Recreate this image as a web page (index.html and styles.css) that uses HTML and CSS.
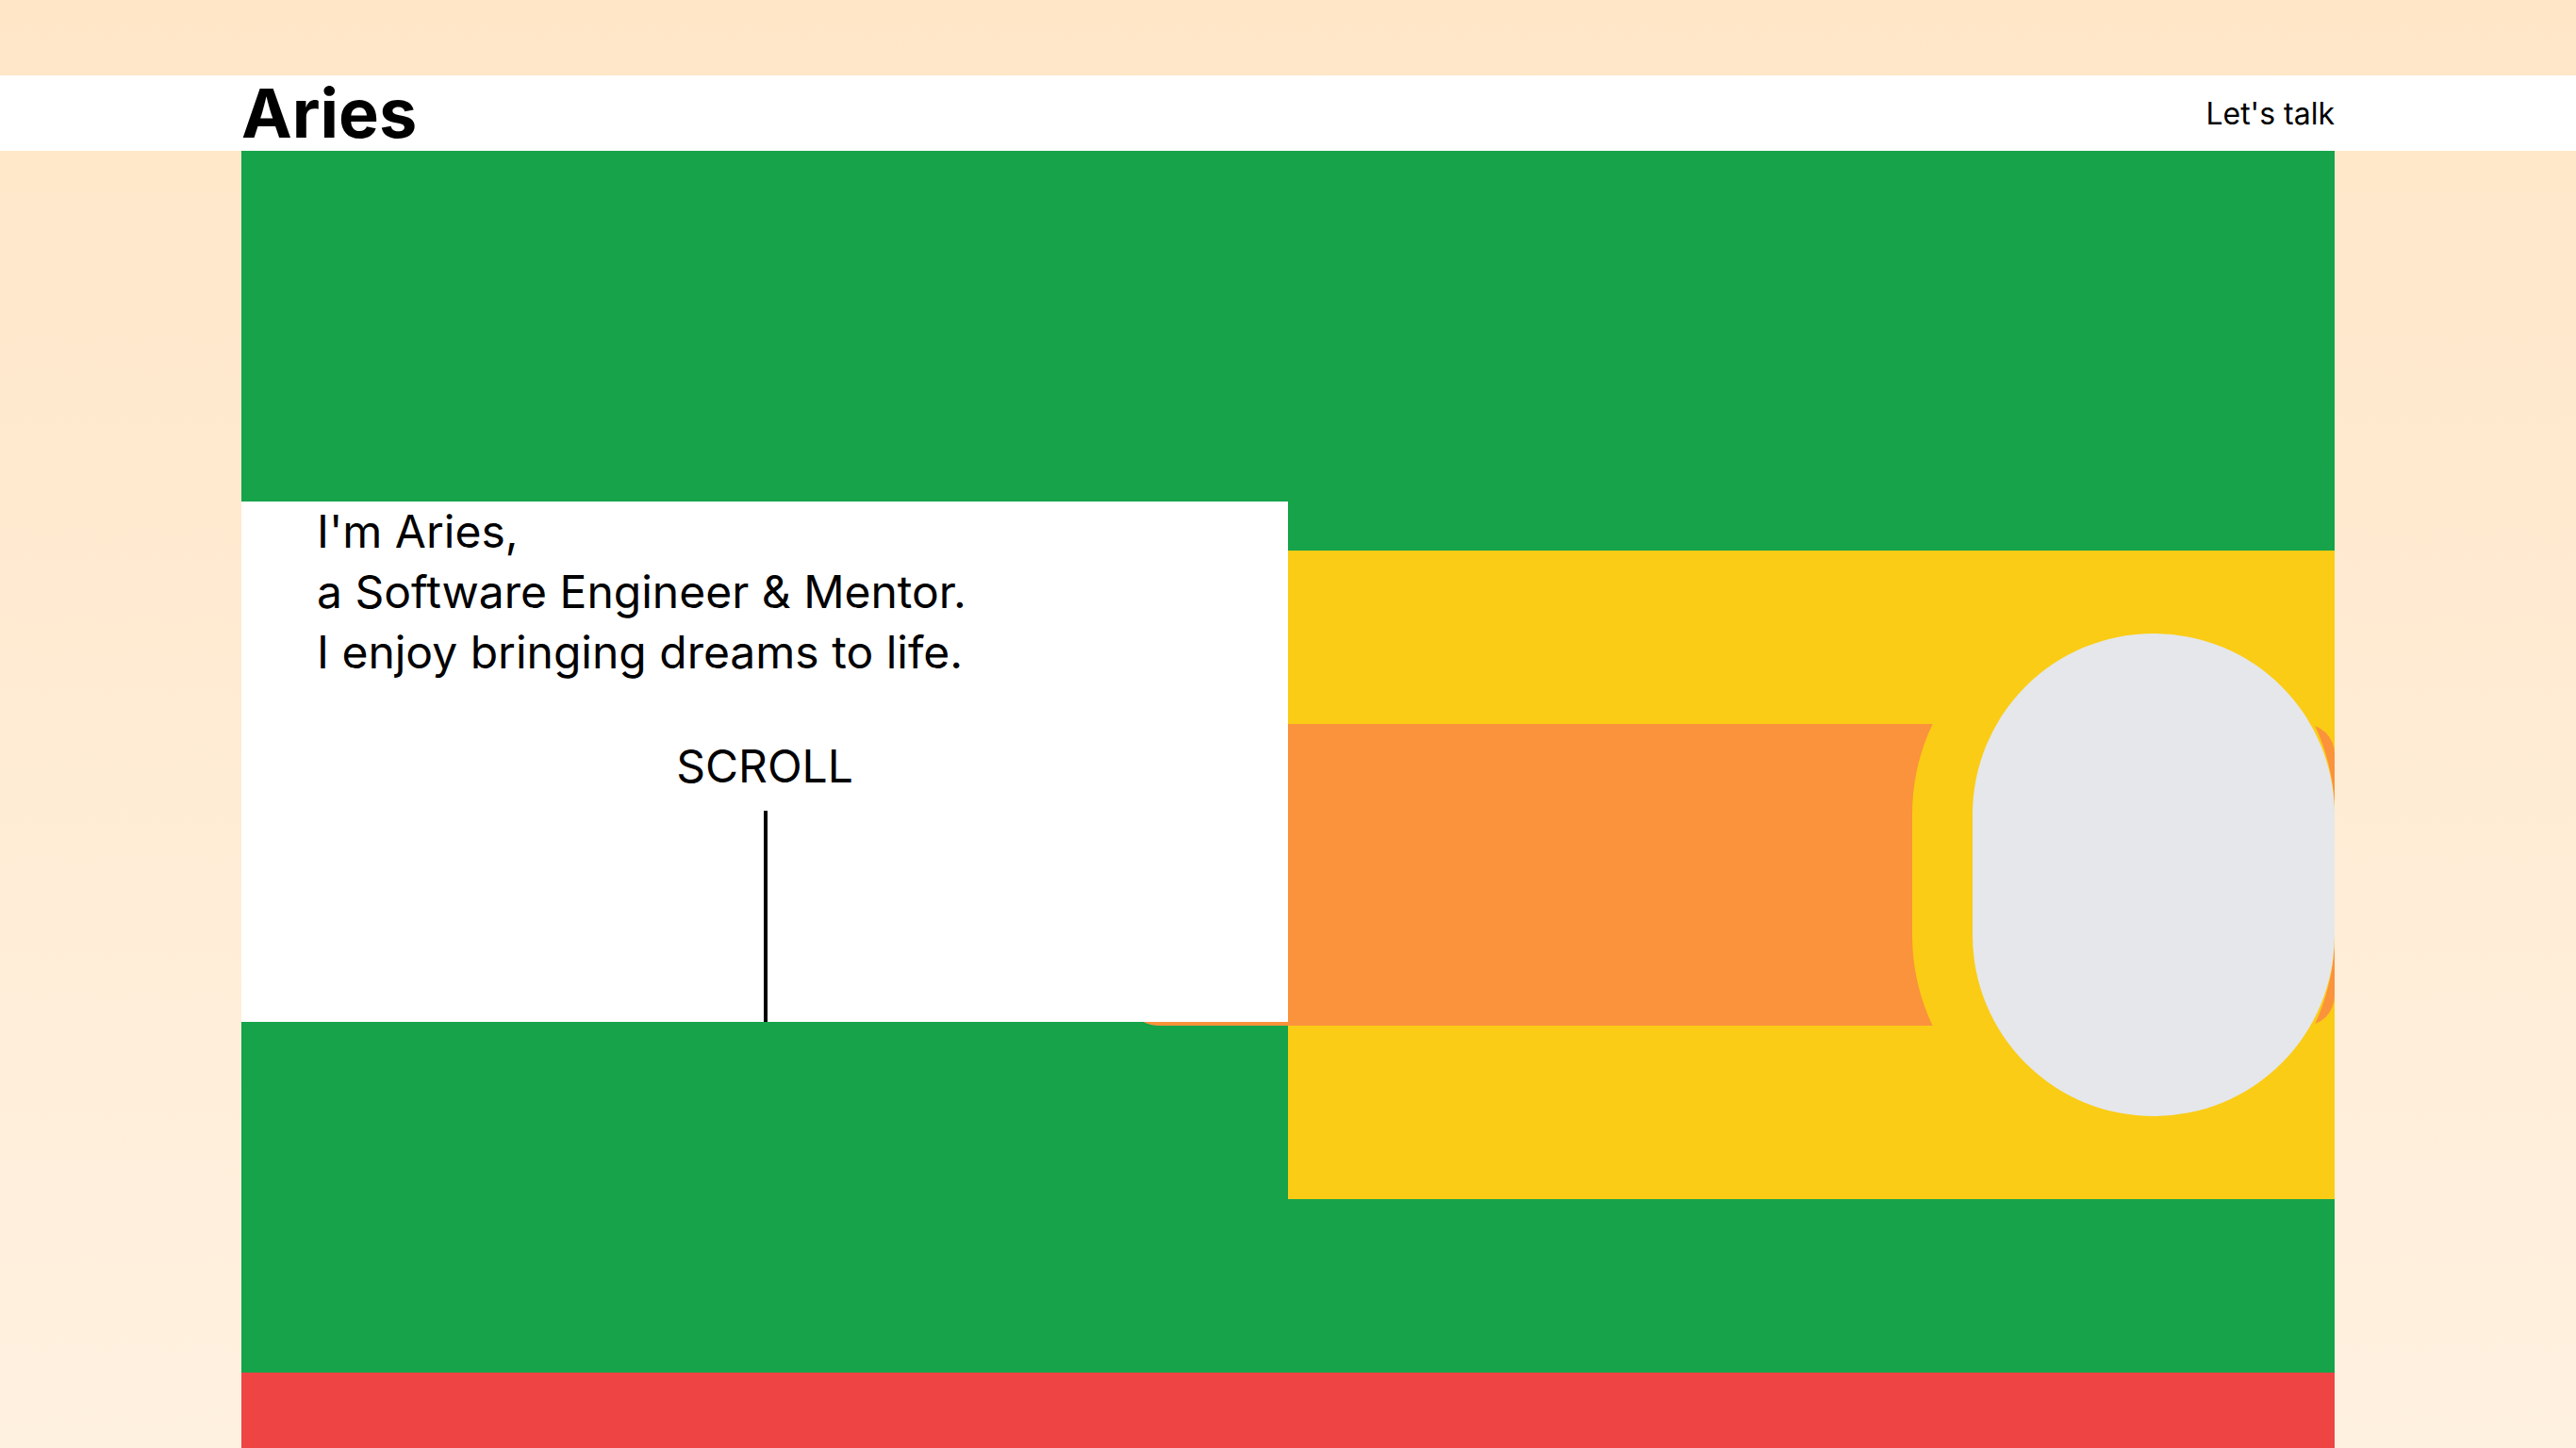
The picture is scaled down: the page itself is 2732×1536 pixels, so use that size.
FILE: index.html
```html
<!DOCTYPE html>
<html lang="en">
<head>
<meta charset="utf-8">
<title>Aries</title>
<link rel="stylesheet" href="styles.css">
</head>
<body>
<header class="site-header">
  <div class="header-inner">
    <a class="logo" href="#">Aries</a>
    <a class="talk" href="#">Let's talk</a>
  </div>
</header>
<main class="page">
  <section class="hero">
    <div class="intro">
      <p class="intro-text">I'm Aries,<br>a Software Engineer &amp; Mentor.<br>I enjoy bringing dreams to life.</p>
      <div class="scroll">
        <span class="scroll-label">SCROLL</span>
        <span class="scroll-line"></span>
      </div>
    </div>
    <div class="visual">
      <div class="bar"></div>
      <div class="portrait"></div>
    </div>
  </section>
  <section class="footer-band"></section>
</main>
</body>
</html>
```
FILE: styles.css
```css
html, body {
  margin: 0;
}
body {
  font-family: Inter, "Noto Sans", sans-serif;
  color: #000;
  background: linear-gradient(180deg, #ffe6c7 0%, #fff1e0 100%);
  min-height: 100vh;
  padding-top: 80px;
  box-sizing: border-box;
}
a {
  color: inherit;
  text-decoration: none;
}
.site-header {
  background: #fff;
}
.header-inner {
  width: 2220px;
  margin: 0 auto;
  padding: 4px 0;
  display: flex;
  justify-content: space-between;
  align-items: center;
}
.logo {
  font-weight: 700;
  font-size: 72px;
  line-height: 1;
}
.talk {
  font-size: 32px;
}
.page {
  width: 2220px;
  margin: 0 auto;
}
.hero {
  background: #16a34a;
  height: 1296px;
  display: grid;
  grid-template-columns: 1fr 1fr;
  align-items: center;
}
.intro {
  position: relative;
  z-index: 1;
  background: #fff;
  height: 552px;
  display: flex;
  flex-direction: column;
}
.intro-text {
  margin: 0;
  padding-left: 80px;
  font-size: 48px;
  line-height: 64px;
}
.scroll {
  flex: 1;
  display: flex;
  flex-direction: column;
  align-items: center;
  margin-top: 57px;
}
.scroll-label {
  font-size: 48px;
  line-height: 64px;
}
.scroll-line {
  flex: 1;
  width: 4px;
  margin-top: 15px;
  margin-left: 2px;
  background: #000;
}
.visual {
  background: #facc15;
  height: 688px;
  margin-top: 240px;
  display: grid;
  grid-template-areas: "stage";
  align-items: center;
}
.bar {
  grid-area: stage;
  height: 320px;
  margin-left: -170px;
  background: #fb923c;
  border-radius: 32px;
}
.portrait {
  grid-area: stage;
  justify-self: end;
  width: 384px;
  height: 512px;
  border-radius: 9999px;
  background: #e5e7eb;
  box-shadow: -32px 0 0 32px #facc15;
}
.footer-band {
  background: #ef4444;
  height: 80px;
}
```
